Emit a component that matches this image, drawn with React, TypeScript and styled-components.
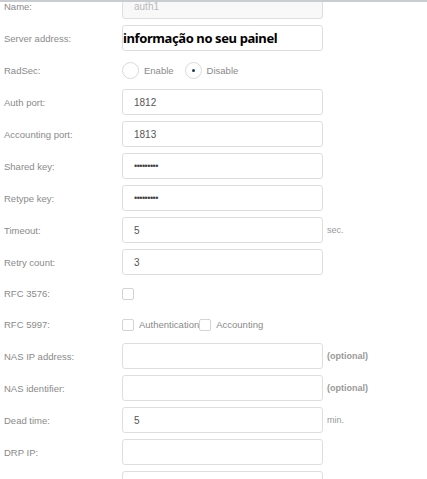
import styled, { createGlobalStyle } from 'styled-components'

const Global = createGlobalStyle`
  html, body { margin: 0; padding: 0; background: #fff; overflow: hidden; }
  body { font-family: "Liberation Sans", Arial, sans-serif; }
`

const TopLine = styled.div`
  position: fixed;
  top: 0;
  left: 0;
  right: 0;
  height: 2px;
  background: #c9cdd0;
  z-index: 2;
`

const Form = styled.div`
  display: flex;
  flex-direction: column;
  gap: 6px;
  margin-top: -7px;
`

const Row = styled.div<{ $short?: boolean }>`
  display: flex;
  align-items: center;
  height: ${p => (p.$short ? '25px' : '26px')};
`

const Label = styled.div`
  width: 118px;
  padding-left: 4px;
  font-size: 9.5px;
  color: #8a8a8a;
  flex-shrink: 0;
`

const Field = styled.div<{ $disabled?: boolean }>`
  width: 188px;
  height: 24px;
  border: 1px solid #dedede;
  border-radius: 3px;
  background: ${p => (p.$disabled ? '#f8f8f8' : '#fff')};
  display: flex;
  align-items: center;
  padding-left: 11px;
  font-size: 10px;
  color: ${p => (p.$disabled ? '#b8b8b8' : '#555')};
  flex-shrink: 0;
`

const Bold = styled.span`
  font-family: "Noto Sans", "Open Sans", sans-serif;
  font-weight: 700;
  font-size: 13px;
  color: #000;
  margin-left: -11px;
  letter-spacing: -0.4px;
  white-space: nowrap;
`

const Dots = styled.span`
  font-size: 9px;
  letter-spacing: -0.5px;
  color: #444;
`

const Suffix = styled.span<{ $bold?: boolean }>`
  margin-left: 4px;
  font-size: 9px;
  color: #999;
  font-weight: ${p => (p.$bold ? 700 : 400)};
`

const Options = styled.div`
  display: flex;
  align-items: center;
`

const Radio = styled.span<{ $on?: boolean }>`
  width: 15px;
  height: 15px;
  border: 1px solid #d9d9d9;
  border-radius: 50%;
  display: inline-flex;
  align-items: center;
  justify-content: center;
  &::after {
    content: '';
    width: 3px;
    height: 3px;
    border-radius: 50%;
    background: ${p => (p.$on ? '#1c3b5a' : 'transparent')};
  }
`

const OptText = styled.span<{ $gap?: number }>`
  font-size: 9.5px;
  color: #8a8a8a;
  margin-left: 5px;
  margin-right: ${p => p.$gap ?? 0}px;
`

const Check = styled.span`
  width: 10px;
  height: 10px;
  border: 1px solid #d4d4d4;
  border-radius: 2px;
  display: inline-block;
`

export default function App() {
  return (
    <>
      <Global />
      <TopLine />
      <Form>
        <Row>
          <Label>Name:</Label>
          <Field $disabled>auth1</Field>
        </Row>
        <Row>
          <Label>Server address:</Label>
          <Field>
            <Bold>informação no seu painel</Bold>
          </Field>
        </Row>
        <Row>
          <Label>RadSec:</Label>
          <Options>
            <Radio />
            <OptText $gap={11}>Enable</OptText>
            <Radio $on />
            <OptText>Disable</OptText>
          </Options>
        </Row>
        <Row>
          <Label>Auth port:</Label>
          <Field>1812</Field>
        </Row>
        <Row>
          <Label>Accounting port:</Label>
          <Field>1813</Field>
        </Row>
        <Row>
          <Label>Shared key:</Label>
          <Field><Dots>•••••••••</Dots></Field>
        </Row>
        <Row>
          <Label>Retype key:</Label>
          <Field><Dots>•••••••••</Dots></Field>
        </Row>
        <Row>
          <Label>Timeout:</Label>
          <Field>5</Field>
          <Suffix>sec.</Suffix>
        </Row>
        <Row>
          <Label>Retry count:</Label>
          <Field>3</Field>
        </Row>
        <Row $short>
          <Label>RFC 3576:</Label>
          <Check />
        </Row>
        <Row $short>
          <Label>RFC 5997:</Label>
          <Options>
            <Check />
            <OptText>Authentication</OptText>
            <Check />
            <OptText>Accounting</OptText>
          </Options>
        </Row>
        <Row>
          <Label>NAS IP address:</Label>
          <Field />
          <Suffix $bold>(optional)</Suffix>
        </Row>
        <Row>
          <Label>NAS identifier:</Label>
          <Field />
          <Suffix $bold>(optional)</Suffix>
        </Row>
        <Row>
          <Label>Dead time:</Label>
          <Field>5</Field>
          <Suffix>min.</Suffix>
        </Row>
        <Row>
          <Label>DRP IP:</Label>
          <Field />
        </Row>
        <Row>
          <Label></Label>
          <Field />
        </Row>
      </Form>
    </>
  )
}
